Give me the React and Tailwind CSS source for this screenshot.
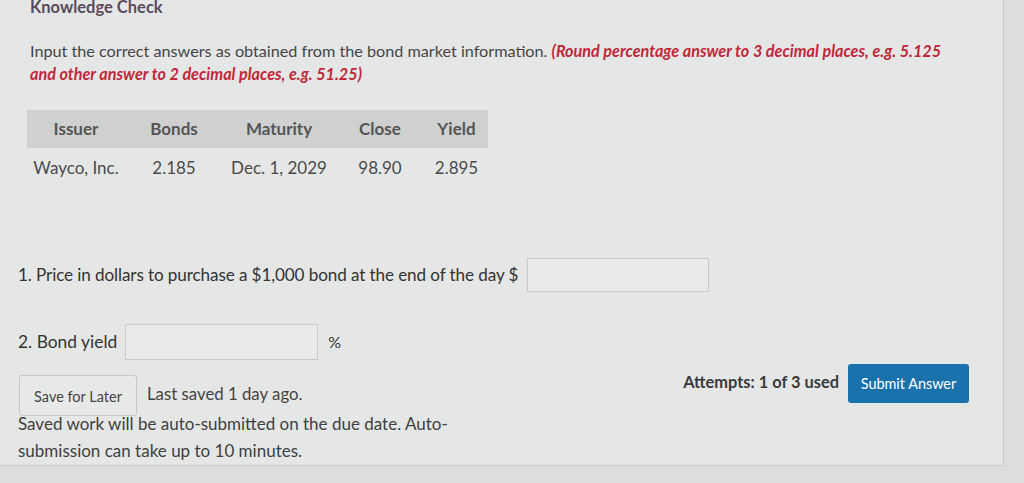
import React from "react";

export default function App() {
  return (
    <div className="w-[1024px] h-[483px] overflow-hidden bg-[#dcdedd]" style={{ fontFamily: "Lato, 'Open Sans', sans-serif" }}>
      <div className="w-[1004px] h-[467px] bg-[#e5e7e6] border-r border-b border-[#c9cbca] text-[#3d3d3d] relative">
        <div className="pl-[30px] text-[16.5px] leading-[16px] font-bold text-[#5b4a5c] -mt-[1px]">Knowledge Check</div>
        <p className="pl-[30px] w-[950px] mt-[24px] text-[16.2px] leading-[23px] text-[#454545]">
          Input the correct answers as obtained from the bond market information.{" "}
          <span className="text-[#c0283a] font-bold italic">(Round percentage answer to 3 decimal places, e.g. 5.125 and other answer to 2 decimal places, e.g. 51.25)</span>
        </p>
        <table className="ml-[27px] mt-[25px] text-[17px] text-[#4a4a4a] border-collapse">
          <thead>
            <tr className="bg-[#cfd1d0] h-[38px]">
              <th className="w-[98px] font-bold text-[#555]">Issuer</th>
              <th className="w-[98px] font-bold text-[#555]">Bonds</th>
              <th className="w-[112px] font-bold text-[#555]">Maturity</th>
              <th className="w-[90px] font-bold text-[#555]">Close</th>
              <th className="w-[63px] font-bold text-[#555]">Yield</th>
            </tr>
          </thead>
          <tbody>
            <tr className="h-[40px]">
              <td className="text-center">Wayco, Inc.</td>
              <td className="text-center">2.185</td>
              <td className="text-center">Dec. 1, 2029</td>
              <td className="text-center">98.90</td>
              <td className="text-center">2.895</td>
            </tr>
          </tbody>
        </table>
        <div className="flex items-center ml-[18px] mt-[70px] text-[17.1px] text-[#333]">
          <span className="tracking-[-0.1px]">1. Price in dollars to purchase a $1,000 bond at the end of the day $</span>
          <div className="ml-[9px] w-[182px] h-[34px] border border-[#c9cbca] bg-[#e9ebea]"></div>
        </div>
        <div className="flex items-center ml-[18px] mt-[32px] text-[17.4px] text-[#333]">
          <span>2. Bond yield</span>
          <div className="ml-[8px] w-[193px] h-[36px] border border-[#c9cbca] bg-[#e9ebea]"></div>
          <span className="ml-[10px] text-[16px]">%</span>
        </div>
        <div className="flex justify-between items-start mt-[6px] pl-[19px] pr-[34px]">
          <div className="flex flex-col">
            <div className="flex items-center mt-[9px]">
              <button className="w-[118px] h-[41px] border border-[#c6c8c7] rounded-[3px] bg-[#e7e9e8] text-[14.5px] text-[#444] pt-[3px]">Save for Later</button>
              <span className="ml-[10px] text-[16.8px] text-[#444] -mt-[3px]">Last saved 1 day ago.</span>
            </div>
            <p className="-ml-[1px] -mt-[6px] w-[470px] text-[17px] leading-[27px] text-[#3f3f3f]">
              Saved work will be auto-submitted on the due date. Auto-submission can take up to 10 minutes.
            </p>
          </div>
          <div className="flex items-center -mt-[2px]">
            <span className="text-[16.4px] font-bold text-[#3a3a3a] -mt-[2px]">Attempts: 1 of 3 used</span>
            <button className="ml-[9px] w-[121px] h-[39px] rounded-[3px] bg-[#1a72ad] text-white text-[14.4px]">Submit Answer</button>
          </div>
        </div>
      </div>
    </div>
  );
}
